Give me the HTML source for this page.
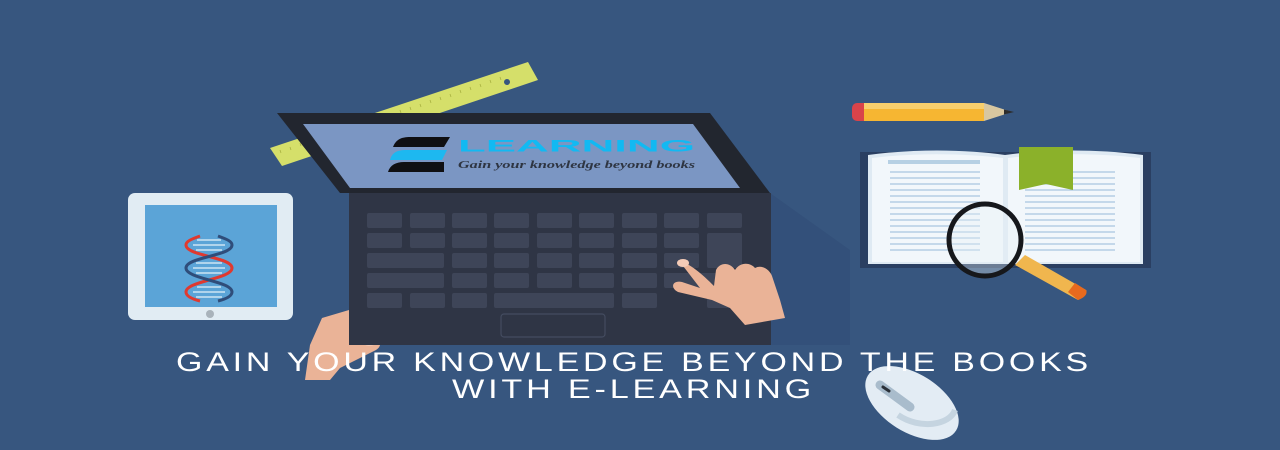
<!DOCTYPE html>
<html><head><meta charset="utf-8"><style>html,body{margin:0;padding:0;background:#37567f;overflow:hidden}svg{display:block}</style></head><body>
<svg width="1280" height="450" viewBox="0 0 1280 450" xmlns="http://www.w3.org/2000/svg">
<rect width="1280" height="450" fill="#37567f"/>
<!-- shadows -->
<polygon points="770,193 850,250 850,345 771,345" fill="#33507a"/>
<polygon points="349,193 771,345 349,345" fill="#2f4a6f" opacity="0.4"/>
<!-- ruler -->
<polygon points="270,148 528,62 538,80 282,166" fill="#d5df6a"/>
<g stroke="#a9b240" stroke-width="0.8">
<path d="M280,150 l1,3 M290,147 l1,3 M300,143 l1,3 M310,140 l1,3 M320,137 l1,3 M400,110 l1,3 M410,107 l1,3 M420,104 l1,3 M430,100 l1,3 M440,97 l1,3 M450,94 l1,3 M460,90 l1,3 M470,87 l1,3 M480,84 l1,3 M490,80 l1,3 M500,77 l1,3"/>
</g>
<circle cx="507" cy="82" r="3" fill="#37567f"/>
<!-- tablet -->
<rect x="128" y="193" width="165" height="127" rx="7" fill="#e1ecf3"/>
<rect x="145" y="205" width="132" height="102" fill="#5ba4d7"/>
<circle cx="210" cy="314" r="4" fill="#a9b3bb"/>
<g stroke="#cde3f3" stroke-width="1.5"><path d="M197,240h24M193,245h32M196,250h26M196,263h26M193,268h32M196,273h26M197,287h24M193,292h32M196,297h26"/></g>
<g fill="none" stroke-width="3">
<path d="M200,236 C192,239 186,241 186,245 C186,256 232,257 232,268 C232,279 186,281 186,292 C186,296 192,299 200,301" stroke="#e0392f"/>
<path d="M218,236 C226,239 232,241 232,245 C232,256 186,257 186,268 C186,279 232,281 232,292 C232,296 226,299 218,301" stroke="#2f4d7a"/>
</g>
<!-- left hand -->
<path d="M322,318 L349,310 L349,330 L370,334 C380,336 384,345 376,350 L340,368 L330,380 L305,380 L310,345 Z" fill="#eab397"/>
<ellipse cx="373" cy="340" rx="10" ry="5" fill="#f4cbb7" transform="rotate(-20 373 340)"/>
<!-- laptop base -->
<rect x="349" y="193" width="422" height="152" fill="#2f3545"/>
<g fill="#3e4558">
<rect x="367" y="213" width="35" height="15" rx="2"/><rect x="410" y="213" width="35" height="15" rx="2"/><rect x="452" y="213" width="35" height="15" rx="2"/><rect x="494" y="213" width="35" height="15" rx="2"/><rect x="537" y="213" width="35" height="15" rx="2"/><rect x="579" y="213" width="35" height="15" rx="2"/><rect x="622" y="213" width="35" height="15" rx="2"/><rect x="664" y="213" width="35" height="15" rx="2"/><rect x="707" y="213" width="35" height="15" rx="2"/>
<rect x="367" y="233" width="35" height="15" rx="2"/><rect x="410" y="233" width="35" height="15" rx="2"/><rect x="452" y="233" width="35" height="15" rx="2"/><rect x="494" y="233" width="35" height="15" rx="2"/><rect x="537" y="233" width="35" height="15" rx="2"/><rect x="579" y="233" width="35" height="15" rx="2"/><rect x="622" y="233" width="35" height="15" rx="2"/><rect x="664" y="233" width="35" height="15" rx="2"/><rect x="707" y="233" width="35" height="35" rx="2"/>
<rect x="367" y="253" width="77" height="15" rx="2"/><rect x="452" y="253" width="35" height="15" rx="2"/><rect x="494" y="253" width="35" height="15" rx="2"/><rect x="537" y="253" width="35" height="15" rx="2"/><rect x="579" y="253" width="35" height="15" rx="2"/><rect x="622" y="253" width="35" height="15" rx="2"/><rect x="664" y="253" width="35" height="15" rx="2"/>
<rect x="367" y="273" width="77" height="15" rx="2"/><rect x="452" y="273" width="35" height="15" rx="2"/><rect x="494" y="273" width="35" height="15" rx="2"/><rect x="537" y="273" width="35" height="15" rx="2"/><rect x="579" y="273" width="35" height="15" rx="2"/><rect x="622" y="273" width="35" height="15" rx="2"/><rect x="664" y="273" width="77" height="15" rx="2"/>
<rect x="367" y="293" width="35" height="15" rx="2"/><rect x="410" y="293" width="35" height="15" rx="2"/><rect x="452" y="293" width="35" height="15" rx="2"/><rect x="494" y="293" width="120" height="15" rx="2"/><rect x="622" y="293" width="35" height="15" rx="2"/><rect x="707" y="293" width="35" height="15" rx="2"/>
</g>
<rect x="501" y="314" width="104" height="23" rx="3" fill="none" stroke="#444c60" stroke-width="1.2"/>
<!-- lid -->
<polygon points="277,113 710,113 770,193 340,193" fill="#22262f"/>
<polygon points="303,124 693,124 740,188 350,188" fill="#7b96c3"/>
<!-- logo -->
<path d="M393,147 C396,139 402,137 410,137 L450,137 L444,147 Z" fill="#0f0f12"/>
<path d="M390,160 C392,152 398,150 406,150 L447,150 L442,160 Z" fill="#1db8f0"/>
<path d="M388,172 C390,165 396,162 404,162 L444,162 L444,172 Z" fill="#0f0f12"/>
<text x="458" y="151.5" font-family="Liberation Sans, sans-serif" font-weight="bold" font-size="17" fill="#12b9f2" textLength="237" lengthAdjust="spacingAndGlyphs">LEARNING</text>
<text x="458" y="168" font-family="Liberation Serif, serif" font-style="italic" font-weight="bold" font-size="11" fill="#2e3542" textLength="237" lengthAdjust="spacingAndGlyphs">Gain your knowledge beyond books</text>
<!-- right hand -->
<path d="M680,262 C690,262 708,280 714,286 L716,270 C720,262 730,262 735,270 C740,262 750,262 755,268 C762,264 770,270 772,276 L780,300 L785,318 L745,325 L730,308 L712,300 L678,292 C670,288 672,280 682,282 L700,288 Z" fill="#eab397"/>
<ellipse cx="683" cy="263" rx="6" ry="4" fill="#f4cbb7"/>
<!-- pencil -->
<rect x="852" y="103" width="18" height="18" rx="5" fill="#d9434a"/>
<rect x="864" y="103" width="120" height="18" fill="#f6b632"/>
<rect x="864" y="103" width="120" height="6" fill="#f8cf6d"/>
<polygon points="984,103 1012,112 984,121" fill="#d8c7a0"/>
<polygon points="1004,109.5 1014,112 1004,114.5" fill="#2c2c2c"/>
<!-- book -->
<rect x="860" y="152" width="291" height="116" fill="#2a3f62"/>
<path d="M868,155 C920,148 970,150 1005,155 C1040,150 1090,148 1143,155 L1143,264 L868,264 Z" fill="#dfeaf3"/>
<path d="M872,158 C920,152 970,154 1003,158 L1003,262 L872,262 Z" fill="#f2f7fb"/>
<path d="M1008,158 C1040,154 1090,152 1140,158 L1140,262 L1008,262 Z" fill="#f2f7fb"/>
<g stroke="#a8c6df" stroke-width="1.3"><path d="M890,172h90M890,178h90M890,184h90M890,190h90M890,196h90M890,202h90M890,208h90M890,214h90M890,220h90M890,226h90M890,232h90M890,238h90M890,244h90M890,250h90M1025,172h90M1025,178h90M1025,184h90M1025,190h90M1025,196h90M1025,202h90M1025,208h90M1025,214h90M1025,220h90M1025,226h90M1025,232h90M1025,238h90M1025,244h90M1025,250h90"/></g>
<rect x="888" y="160" width="92" height="4" fill="#b6d0e4"/>
<polygon points="1019,147 1073,147 1073,190 1046,184 1019,190" fill="#8bb12a"/>
<!-- magnifier -->
<path d="M1015,265 L1078,300 C1084,296 1088,292 1086,290 L1025,255 Z" fill="#f0b64e"/>
<path d="M1068,292 L1078,300 C1084,298 1088,294 1086,290 L1075,283 Z" fill="#e86a1e"/>
<circle cx="985" cy="240" r="36" fill="#e8f0f7" fill-opacity="0.35" stroke="#16181c" stroke-width="5"/>
<!-- mouse -->
<ellipse cx="912" cy="403" rx="52" ry="29" transform="rotate(32 912 403)" fill="#e3ecf4"/>
<path d="M898,415 C920,430 950,425 955,410" fill="none" stroke="#c5d4e0" stroke-width="6"/>
<path d="M880,385 L910,407" stroke="#a9bccc" stroke-width="9" stroke-linecap="round"/>
<path d="M883,387 L889,391" stroke="#2a3038" stroke-width="3" stroke-linecap="round"/>
<!-- title -->
<g font-family="Liberation Sans, sans-serif" font-size="27" fill="#ffffff" letter-spacing="3">
<text x="176" y="371" textLength="916" lengthAdjust="spacingAndGlyphs">GAIN YOUR KNOWLEDGE BEYOND THE BOOKS</text>
<text x="452" y="398" textLength="363" lengthAdjust="spacingAndGlyphs">WITH E-LEARNING</text>
</g>
</svg>
</body></html>
